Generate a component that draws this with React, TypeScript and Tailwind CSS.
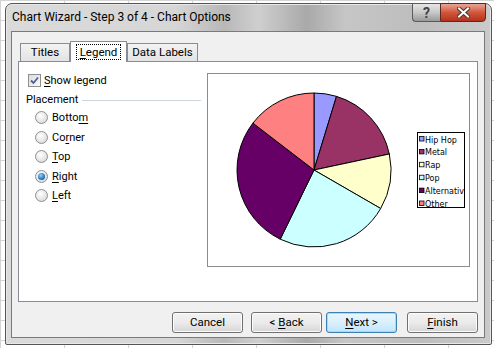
import React from 'react';

const font = { fontFamily: 'Roboto, "Noto Sans", Arial, sans-serif' };

const slices = [
  { name: 'Hip Hop', color: '#9999FF', from: 0, to: 17 },
  { name: 'Metal', color: '#993366', from: 17, to: 78 },
  { name: 'Rap', color: '#FFFFCC', from: 78, to: 120 },
  { name: 'Pop', color: '#CCFFFF', from: 120, to: 206 },
  { name: 'Alternative', color: '#660066', from: 206, to: 307.5 },
  { name: 'Other', color: '#FF8080', from: 307.5, to: 360 },
];

const CX = 106;
const CY = 96;
const R = 77;

const pt = (deg: number) => {
  const a = (deg * Math.PI) / 180;
  return `${(CX + R * Math.sin(a)).toFixed(2)} ${(CY - R * Math.cos(a)).toFixed(2)}`;
};

const slicePath = (from: number, to: number) =>
  `M${CX} ${CY} L${pt(from)} A${R} ${R} 0 ${to - from > 180 ? 1 : 0} 1 ${pt(to)} Z`;

const Accel: React.FC<{ pre?: string; k: string; post?: string }> = ({ pre = '', k, post = '' }) => (
  <span>
    {pre}
    <span className="underline underline-offset-2">{k}</span>
    {post}
  </span>
);

const Radio: React.FC<{ checked?: boolean; children: React.ReactNode }> = ({ checked, children }) => (
  <div className="h-[19.5px] flex items-center gap-[4px] pl-[16px]">
    <div className="w-[13px] h-[13px] rounded-full border border-[#8e8f8f] bg-[radial-gradient(circle_at_40%_35%,#ffffff,#e6e6e6_55%,#cfcfcf)] flex items-center justify-center">
      {checked && (
        <div className="w-[7px] h-[7px] rounded-full bg-[radial-gradient(circle_at_40%_35%,#8fd3ff,#2a7fc4_55%,#0d3f73)]" />
      )}
    </div>
    <span className="text-[11px] leading-none text-black">{children}</span>
  </div>
);

const Tab: React.FC<{ active?: boolean; w: string; children: React.ReactNode }> = ({ active, w, children }) =>
  active ? (
    <div className={`${w} h-[21px] bg-white border border-b-0 border-[#898c95] flex items-center justify-center relative z-10 -mb-px pb-px`}>
      <span className="border border-dotted border-black px-[3px] leading-[14px] text-[11.5px]">{children}</span>
    </div>
  ) : (
    <div className={`${w} h-[18px] bg-gradient-to-b from-[#f3f3f3] to-[#e3e3e3] border border-b-0 border-[#898c95] flex items-center justify-center text-[11.5px]`}>
      {children}
    </div>
  );

const Button: React.FC<{ focused?: boolean; children: React.ReactNode }> = ({ focused, children }) => (
  <div
    className={`w-[71px] h-[21px] rounded-[3px] border flex items-center justify-center text-[11.5px] ${
      focused
        ? 'border-[#3c7fb1] bg-gradient-to-b from-[#eaf6fd] via-[#d9f0fc] to-[#bee6fd] shadow-[inset_0_0_0_1px_#9fdcff]'
        : 'border-[#707070] bg-gradient-to-b from-[#f2f2f2] via-[#ebebeb] to-[#d6d6d6] shadow-[inset_0_0_0_1px_#fcfcfc]'
    }`}
  >
    {children}
  </div>
);

export default function App() {
  return (
    <div
      className="w-[494px] h-[348px] overflow-hidden pl-[5px] pt-[3px] bg-white bg-[linear-gradient(#d4d4d4_1px,transparent_1px),linear-gradient(90deg,#d4d4d4_1px,transparent_1px)] bg-[length:64px_20px]"
      style={font}
    >
      <div className="w-[487px] h-[342px] flex flex-col rounded-t-[7px] rounded-b-[2px] border border-[#555] bg-[linear-gradient(90deg,#dadada_0%,#d6d6d6_35%,#b8b8b8_45%,#cfcfcf_52%,#a9a9a9_62%,#c6c6c6_70%,#bdbdbd_85%,#cacaca_100%)] shadow-[inset_0_0_0_1px_#e8e8e8]">
        <div className="h-[27px] flex items-start justify-between">
          <div className="pl-[6px] pt-[5px] text-[12px] text-black leading-[16px]">Chart Wizard - Step 3 of 4 - Chart Options</div>
          <div className="flex mr-[5px] -mt-px">
            <div className="w-[28px] h-[19px] rounded-bl-[4px] border border-[#5a5a5a] border-r-0 bg-gradient-to-b from-[#e6e6e6] via-[#c8c8c8] to-[#9a9a9a] flex items-center justify-center text-[14px] font-bold text-[#444] leading-none">
              ?
            </div>
            <div className="w-[46px] h-[19px] rounded-br-[4px] border border-[#5a2a20] bg-gradient-to-b from-[#e8a493] via-[#d0573c] to-[#b4311b] flex items-center justify-center">
              <svg width="13" height="11" viewBox="0 0 13 11">
                <path d="M2 1.5 L11 9.5 M11 1.5 L2 9.5" stroke="#3a3a3a" strokeWidth="4" strokeLinecap="square" />
                <path d="M2 1.5 L11 9.5 M11 1.5 L2 9.5" stroke="#ffffff" strokeWidth="2" strokeLinecap="square" />
              </svg>
            </div>
          </div>
        </div>

        <div className="ml-[5px] w-[474px] h-[307px] border border-[#7a7a7a] bg-[#f0f0f0] px-[6px] pt-[8px] flex flex-col">
          <div className="flex items-end pl-[2px] h-[21px]">
            <Tab w="w-[50px]">Titles</Tab>
            <Tab active w="w-[57px]">
              <Accel k="L" post="egend" />
            </Tab>
            <Tab w="w-[71px]">Data Labels</Tab>
          </div>

          <div className="w-[460px] h-[241px] border border-[#898c95] bg-white flex pt-[11px]">
            <div className="w-[188px] flex flex-col">
              <div className="mt-[1px] h-[13px] flex items-center gap-[3px] pl-[9px]">
                <div className="w-[13px] h-[13px] border border-[#8e8f8f] bg-gradient-to-br from-[#dcdcdc] to-[#fbfbfb] flex items-center justify-center">
                  <svg width="9" height="9" viewBox="0 0 9 9">
                    <path d="M1 4.5 L3.5 7 L8 1.5" fill="none" stroke="#4a5f97" strokeWidth="1.8" />
                  </svg>
                </div>
                <span className="text-[11px] leading-none">
                  <Accel k="S" post="how legend" />
                </span>
              </div>
              <div className="mt-[4px] h-[16px] flex items-center pl-[7px] pr-[6px]">
                <span className="text-[11px] leading-none">Placement</span>
                <div className="flex-1 h-px bg-[#ccd6de] ml-[4px] mt-[2px]" />
              </div>
              <div className="mt-[1px] flex flex-col">
                <Radio>
                  <Accel pre="Botto" k="m" />
                </Radio>
                <Radio>
                  <Accel pre="Co" k="r" post="ner" />
                </Radio>
                <Radio>
                  <Accel k="T" post="op" />
                </Radio>
                <Radio checked>
                  <Accel k="R" post="ight" />
                </Radio>
                <Radio>
                  <Accel k="L" post="eft" />
                </Radio>
              </div>
            </div>

            <div className="w-[263px] h-[194px] border border-[#8c8c8c] bg-white">
              <svg width="261" height="192" viewBox="0 0 261 192">
                {slices.map((s) => (
                  <path key={s.name} d={slicePath(s.from, s.to)} fill={s.color} stroke="#000" strokeWidth="1" strokeLinejoin="round" />
                ))}
                <defs>
                  <clipPath id="legend-clip">
                    <rect x="209" y="58" width="48" height="76" />
                  </clipPath>
                </defs>
                <rect x="209.5" y="58.5" width="47" height="75" fill="#fff" stroke="#000" />
                <g clipPath="url(#legend-clip)">
                  {slices.map((s, i) => (
                    <g key={s.name}>
                      <rect x="211.5" y={62.5 + i * 12.9} width="4.5" height="4.5" fill={s.color} stroke="#000" strokeWidth="0.8" />
                      <text
                        x="217"
                        y={68.5 + i * 12.9}
                        fontSize="8"
                        fontFamily='"DejaVu Sans", Verdana, sans-serif'
                        fill="#000"
                      >
                        {s.name}
                      </text>
                    </g>
                  ))}
                </g>
              </svg>
            </div>
          </div>

          <div className="mt-[10px] flex justify-end">
            <Button>Cancel</Button>
            <div className="w-[8px]" />
            <Button>
              <Accel pre="< " k="B" post="ack" />
            </Button>
            <div className="w-[4px]" />
            <Button focused>
              <Accel k="N" post="ext >" />
            </Button>
            <div className="w-[10px]" />
            <Button>
              <Accel k="F" post="inish" />
            </Button>
          </div>
        </div>
      </div>
    </div>
  );
}
